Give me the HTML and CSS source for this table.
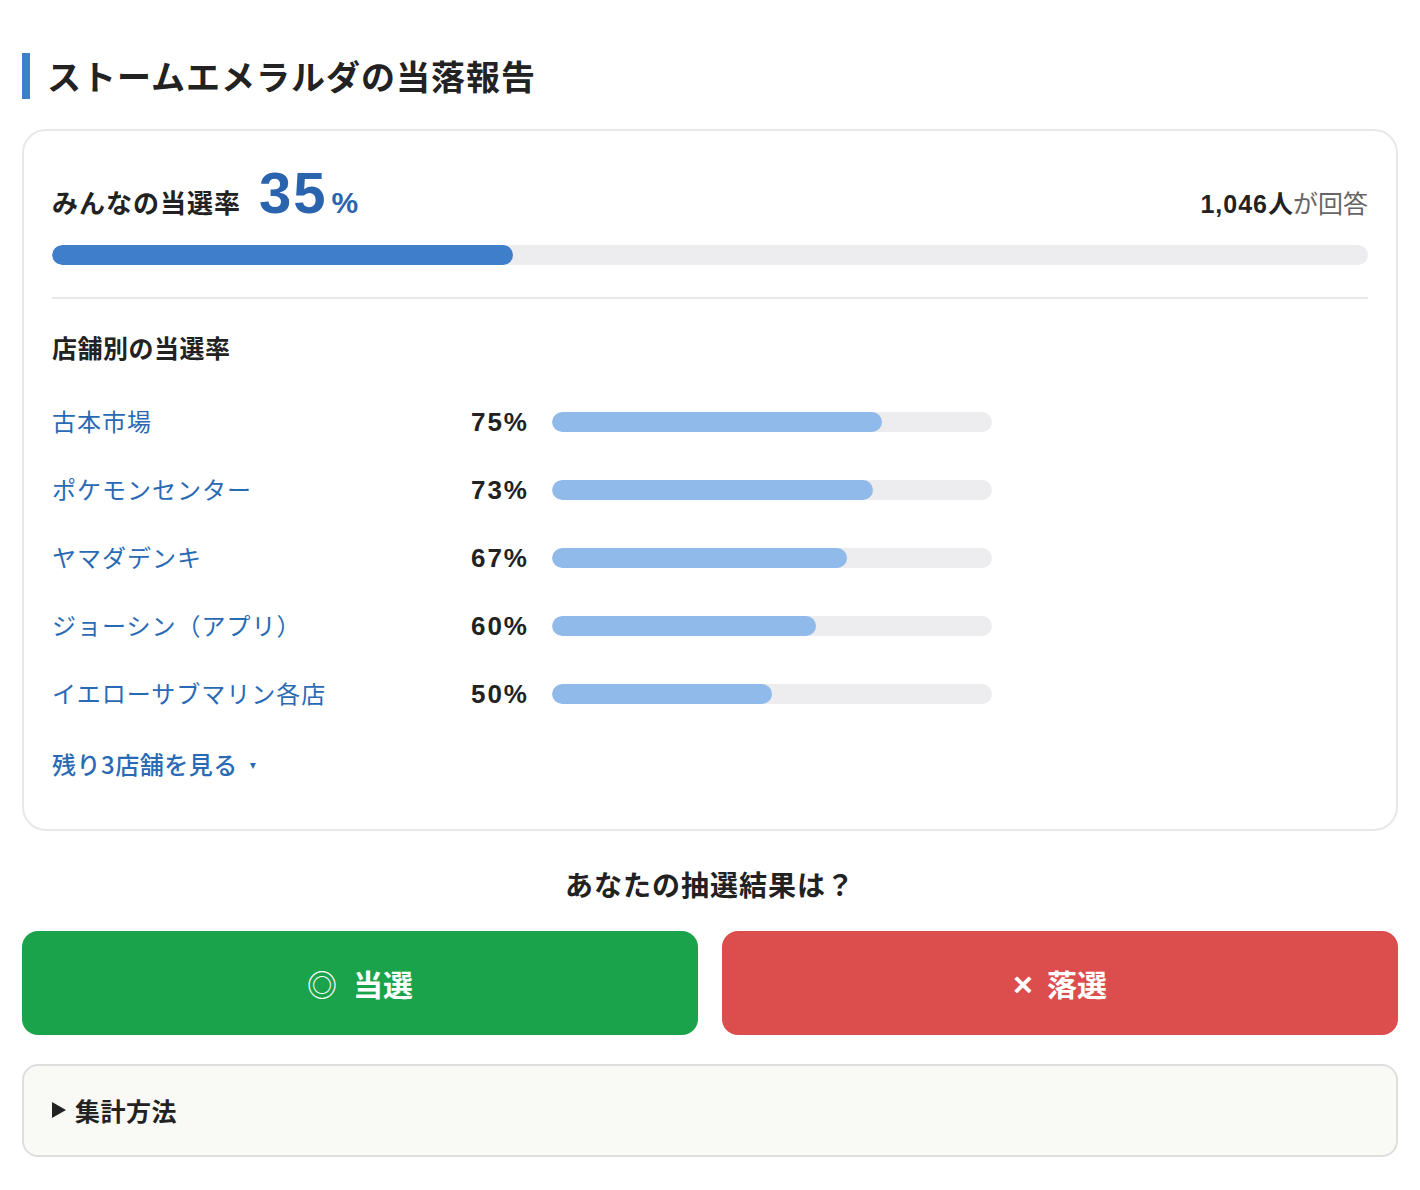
FILE: index.html
```html
<!DOCTYPE html>
<html lang="ja">
<head>
<meta charset="utf-8">
<title>ストームエメラルダの当落報告</title>
<link rel="stylesheet" href="styles.css">
</head>
<body>
<main class="page">
  <h2 class="title">ストームエメラルダの当落報告</h2>

  <section class="card">
    <div class="summary">
      <div class="rate">
        <span class="rate-label">みんなの当選率</span>
        <span class="rate-num">35</span><span class="rate-pct">%</span>
      </div>
      <div class="count"><b>1,046</b><b class="jp">人</b>が回答</div>
    </div>
    <div class="track main-track"><div class="fill main-fill" style="width:35%"></div></div>

    <hr class="divider">

    <h3 class="sub">店舗別の当選率</h3>
    <ul class="stores">
      <li class="store"><span class="name">古本市場</span><span class="pct">75%</span><div class="track s-track"><div class="fill s-fill" style="width:75%"></div></div></li>
      <li class="store"><span class="name">ポケモンセンター</span><span class="pct">73%</span><div class="track s-track"><div class="fill s-fill" style="width:73%"></div></div></li>
      <li class="store"><span class="name">ヤマダデンキ</span><span class="pct">67%</span><div class="track s-track"><div class="fill s-fill" style="width:67%"></div></div></li>
      <li class="store"><span class="name">ジョーシン（アプリ）</span><span class="pct">60%</span><div class="track s-track"><div class="fill s-fill" style="width:60%"></div></div></li>
      <li class="store"><span class="name">イエローサブマリン各店</span><span class="pct">50%</span><div class="track s-track"><div class="fill s-fill" style="width:50%"></div></div></li>
    </ul>
    <div class="more">残り3店舗を見る<span class="caret"></span></div>
  </section>

  <p class="question">あなたの抽選結果は？</p>
  <div class="buttons">
    <button class="btn win"><span class="mark">◎</span>当選</button>
    <button class="btn lose"><span class="mark x">×</span>落選</button>
  </div>

  <details class="method">
    <summary><span class="tri"></span>集計方法</summary>
  </details>
</main>
</body>
</html>
```

FILE: styles.css
```css
* { box-sizing: border-box; }
html, body { margin: 0; padding: 0; background: #fff; }
body {
  font-family: "Noto Sans CJK JP", "Noto Sans", sans-serif;
  color: #222;
}
.rate-num, .rate-pct, .count b, .pct {
  font-family: "Liberation Sans", "Noto Sans CJK JP", sans-serif;
}
.page {
  padding: 53px 22px 30px 22px;
}
.title {
  margin: 0;
  border-left: 8px solid #3f7ecb;
  padding-left: 17px;
  font-size: 34px;
  font-weight: 700;
  line-height: 46px;
  letter-spacing: 1px;
}
.card {
  margin-top: 30px;
  border: 2px solid #e8e8e8;
  border-radius: 24px;
  padding: 32px 28px 48px 28px;
}
.summary {
  display: flex;
  justify-content: space-between;
  align-items: baseline;
}
.rate { display: flex; align-items: baseline; }
.rate-label { font-size: 26px; font-weight: 700; letter-spacing: 1px; margin-right: 18px; }
.rate-num {
  font-size: 58px;
  font-weight: 700;
  color: #2a64ae;
  line-height: 60px;
  letter-spacing: 2px;
}
.rate-pct { font-size: 30px; font-weight: 700; color: #2a64ae; margin-left: 4px; }
.count { font-size: 25px; color: #666; }
.count b { color: #222; font-weight: 700; letter-spacing: 1px; }
.count b.jp { font-family: "Noto Sans CJK JP", sans-serif; letter-spacing: 0; }
.track {
  background: #ededf0;
  border-radius: 10px;
  height: 20px;
  overflow: hidden;
}
.fill { height: 100%; border-radius: 10px; }
.main-track { margin-top: 22px; }
.main-fill { background: #3f7ecb; }
.divider {
  border: 0;
  border-top: 2px solid #e8e8e8;
  margin: 32px 0 0 0;
}
.sub {
  margin: 31px 0 0 0;
  font-size: 25px;
  line-height: 34px;
  font-weight: 700;
  letter-spacing: 0.5px;
}
.stores { list-style: none; margin: 22px 0 0 0; padding: 0; }
.store {
  display: grid;
  grid-template-columns: 395px 80px 465px;
  align-items: center;
  height: 68px;
}
.name { color: #2a6ab5; font-size: 24px; letter-spacing: 1px; }
.pct {
  text-align: right;
  font-size: 26px;
  font-weight: 700;
  letter-spacing: 2px;
  margin-right: -2px;
  margin-top: 4px;
}
.store .s-track { margin-left: 25px; margin-top: 4px; }
.s-fill { background: #8fbaea; }
.more {
  margin-top: 21px;
  color: #2a6ab5;
  font-size: 24px;
  line-height: 34px;
  font-weight: 500;
  letter-spacing: 0.5px;
  display: flex;
  align-items: center;
}
.caret {
  display: inline-block;
  width: 0;
  height: 0;
  border-left: 3.5px solid transparent;
  border-right: 3.5px solid transparent;
  border-top: 6px solid #2a6ab5;
  margin-left: 12px;
  margin-top: 4px;
}
.question {
  margin: 34px 0 0 0;
  text-align: center;
  font-size: 28px;
  font-weight: 700;
  line-height: 38px;
  letter-spacing: 1px;
}
.buttons {
  margin-top: 28px;
  display: grid;
  grid-template-columns: 1fr 1fr;
  column-gap: 24px;
}
.btn {
  height: 104px;
  border: 0;
  border-radius: 16px;
  color: #fff;
  font-family: "Noto Sans CJK JP", "Noto Sans", sans-serif;
  font-size: 30px;
  font-weight: 700;
  display: flex;
  align-items: center;
  justify-content: center;
}
.btn .mark { font-weight: 400; margin-right: 16px; }
.btn .mark.x {
  font-family: "Liberation Sans", sans-serif;
  font-weight: 700;
  font-size: 34px;
  margin-right: 14px;
  margin-top: 2px;
}
.win { background: #1aa34a; }
.lose { background: #dc4d4d; }
.method {
  margin-top: 29px;
  background: #f9f9f6;
  border: 2px solid #dedede;
  border-radius: 16px;
  padding: 26px 28px 27px 28px;
}
.method summary {
  font-size: 25px;
  font-weight: 700;
  line-height: 36px;
  letter-spacing: 0.5px;
  cursor: pointer;
  list-style: none;
  display: flex;
  align-items: center;
}
.method summary::-webkit-details-marker { display: none; }
.tri {
  display: inline-block;
  width: 0;
  height: 0;
  border-top: 8px solid transparent;
  border-bottom: 8px solid transparent;
  border-left: 14px solid #222;
  margin-right: 9px;
}
```
